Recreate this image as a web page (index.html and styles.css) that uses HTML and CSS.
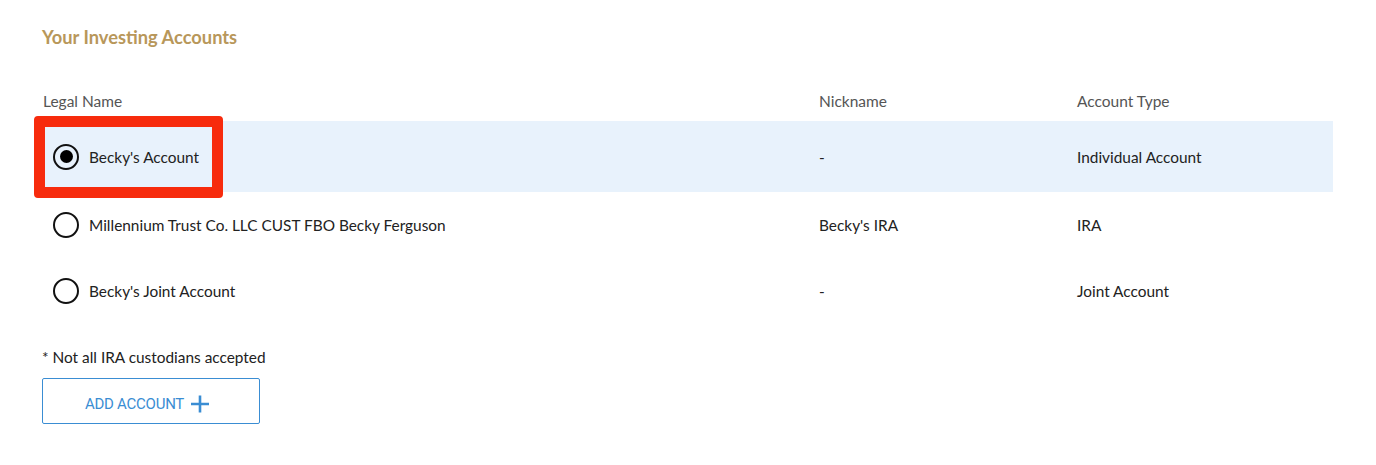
FILE: index.html
```html
<!DOCTYPE html>
<html>
<head>
<meta charset="utf-8">
<link rel="stylesheet" href="styles.css">
</head>
<body>
<div class="page">
  <h2 class="title">Your Investing Accounts</h2>
  <div class="table">
    <div class="row head">
      <div class="c1">Legal Name</div>
      <div class="c2">Nickname</div>
      <div class="c3">Account Type</div>
    </div>
    <div class="row item selected">
      <div class="c1 name">
        <span class="highlight-box"></span>
        <span class="radio checked"></span>
        <span>Becky's Account</span>
      </div>
      <div class="c2">-</div>
      <div class="c3">Individual Account</div>
    </div>
    <div class="row item">
      <div class="c1 name">
        <span class="radio"></span>
        <span>Millennium Trust Co. LLC CUST FBO Becky Ferguson</span>
      </div>
      <div class="c2">Becky's IRA</div>
      <div class="c3">IRA</div>
    </div>
    <div class="row item">
      <div class="c1 name">
        <span class="radio"></span>
        <span>Becky's Joint Account</span>
      </div>
      <div class="c2">-</div>
      <div class="c3">Joint Account</div>
    </div>
  </div>
  <p class="note">* Not all IRA custodians accepted</p>
  <button class="add-btn">ADD ACCOUNT
    <svg class="plus" width="20" height="20" viewBox="0 0 20 20"><path d="M10 1.5V18.5M1 10H19" stroke="#3a8dd3" stroke-width="2.6" fill="none"/></svg>
  </button>
</div>
</body>
</html>
```

FILE: styles.css
```css
* { box-sizing: border-box; }
html, body { margin: 0; padding: 0; background: #fff; }
body { font-family: Lato, "Open Sans", sans-serif; color: #222; }
.page { padding: 25px 43px 0 42px; }
.title {
  margin: 0;
  font-size: 18.3px;
  font-weight: 700;
  color: #b8975a;
  line-height: 24px;
}
.table { margin-top: 38px; }
.row { display: grid; grid-template-columns: 777px 258px 1fr; align-items: center; }
.row.head { height: 28px; font-size: 15.5px; color: #555; padding-left: 1px; }
.row.head .c2, .row.head .c3 { margin-left: -1px; }
.row.item { height: 66px; font-size: 15.4px; color: #222; }
.row.item.selected { background: #e8f2fc; height: 71px; margin-top: 6px; }
.name { display: flex; align-items: center; gap: 10px; padding-left: 11px; position: relative; }
.radio {
  width: 26px; height: 26px;
  border: 2px solid #111;
  border-radius: 50%;
  display: inline-flex; align-items: center; justify-content: center;
  flex: none;
  background: #fff;
}
.radio.checked { background: transparent; }
.radio.checked::after {
  content: ""; width: 13px; height: 13px; border-radius: 50%; background: #000;
}
.highlight-box {
  position: absolute;
  left: -8px; top: -28px;
  width: 189px; height: 82px;
  border: 11px solid #f72b0d;
  border-radius: 4px;
}
.note { margin: 23px 0 0 0; font-size: 15.4px; line-height: 20px; color: #222; }
.add-btn {
  margin-top: 11px;
  width: 218px; height: 46px;
  border: 1.5px solid #3a8dd3;
  border-radius: 2px;
  background: #fff;
  color: #3a8dd3;
  font-family: Roboto, sans-serif;
  font-size: 15px;
  letter-spacing: -0.25px;
  display: flex; align-items: center; justify-content: center; gap: 6px;
  padding: 5px 7px 0 0;
}
.plus { display: block; }
```
